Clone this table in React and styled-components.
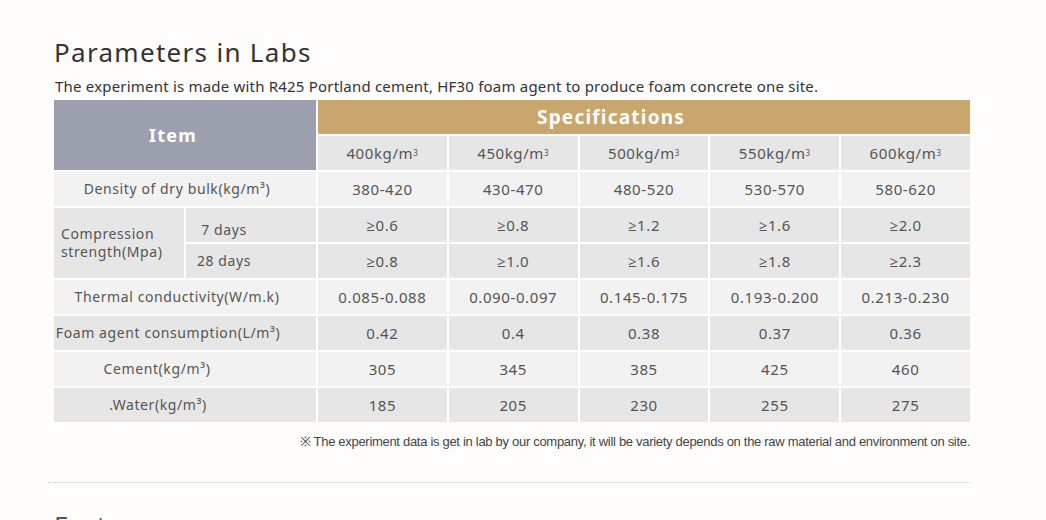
import React from "react";
import styled, { createGlobalStyle } from "styled-components";

const GlobalStyle = createGlobalStyle`
  body {
    margin: 0;
    background: #fefdfc;
    font-family: "Noto Sans", "Open Sans", sans-serif;
    color: #4a4a4a;
  }
`;

const Page = styled.div`
  padding: 30px 0 0 54px;
  width: 916px;
`;

const Title = styled.h2`
  margin: 0;
  font-size: 26px;
  font-weight: 400;
  line-height: 44px;
  color: #333;
  letter-spacing: 1.3px;
`;

const Lead = styled.p`
  margin: 0 0 0 1px;
  font-size: 15px;
  line-height: 24px;
  color: #333;
  letter-spacing: 0.2px;
`;

const Grid = styled.div`
  margin-top: 2px;
  display: grid;
  grid-template-columns: 130px 130px repeat(5, 1fr);
  grid-auto-rows: 34px;
  gap: 2px;
  background: #fff;
`;

const Cell = styled.div`
  display: flex;
  align-items: center;
  justify-content: ${({ $left }) => ($left ? "flex-start" : "center")};
  grid-column: ${({ $col }) => $col || "auto"};
  grid-row: ${({ $row }) => $row || "auto"};
  background: ${({ $dark }) => ($dark ? "#e6e6e6" : "#f2f2f2")};
  font-size: 15px;
  letter-spacing: 0.6px;
  color: #555;
  white-space: nowrap;
  padding: ${({ $pad }) => $pad || "0"};
`;

const HeadCell = styled(Cell)`
  background: ${({ $gold }) => ($gold ? "#c9a66e" : "#9c9fae")};
  color: #fff;
  font-weight: 700;
  font-size: ${({ $gold }) => ($gold ? "19px" : "18px")};
  letter-spacing: 1.2px;
`;

const Label = styled(Cell)`
  font-size: 14px;
  line-height: 18px;
  white-space: normal;
`;

const Sup = styled.sup`
  font-size: 8px;
  vertical-align: 7px;
  line-height: 0;
`;

const Note = styled.p`
  margin: 10px 0 0;
  text-align: right;
  font-family: "Liberation Sans", Arial, sans-serif;
  font-size: 13px;
  letter-spacing: -0.3px;
  color: #444;
`;

const Divider = styled.div`
  margin: 32px 0 0 -6px;
  width: 922px;
  border-top: 1px dotted #c8c8c8;
`;

const NextTitle = styled.h2`
  margin: 27px 0 0;
  font-size: 26px;
  line-height: 30px;
  font-weight: 400;
  color: #555;
`;

const densities = ["400", "450", "500", "550", "600"];

const rows = [
  { label: "Density of dry bulk(kg/m³)", pad: "0 16px 0 0", values: ["380-420", "430-470", "480-520", "530-570", "580-620"], dark: false },
  { label: "Thermal conductivity(W/m.k)", pad: "0 16px 0 0", values: ["0.085-0.088", "0.090-0.097", "0.145-0.175", "0.193-0.200", "0.213-0.230"], dark: false },
  { label: "Foam agent consumption(L/m³)", pad: "0 34px 0 0", values: ["0.42", "0.4", "0.38", "0.37", "0.36"], dark: true },
  { label: "Cement(kg/m³)", pad: "0 56px 0 0", values: ["305", "345", "385", "425", "460"], dark: false },
  { label: ".Water(kg/m³)", pad: "0 54px 0 0", values: ["185", "205", "230", "255", "275"], dark: true },
];

const strength = [
  { days: "7 days", pad: "10px 54px 0 0", values: ["≥0.6", "≥0.8", "≥1.2", "≥1.6", "≥2.0"] },
  { days: "28 days", pad: "0 54px 0 0", values: ["≥0.8", "≥1.0", "≥1.6", "≥1.8", "≥2.3"] },
];

const ValueRow = ({ row }) => (
  <>
    <Label $col="1 / 3" $dark={row.dark} $pad={row.pad}>
      {row.label}
    </Label>
    {row.values.map((v, i) => (
      <Cell key={i} $dark={row.dark}>
        {v}
      </Cell>
    ))}
  </>
);

const App = () => {
  return (
    <Page>
      <GlobalStyle />
      <Title>Parameters in Labs</Title>
      <Lead>
        The experiment is made with R425 Portland cement, HF30 foam agent to produce foam concrete one site.
      </Lead>

      <Grid>
        <HeadCell $col="1 / 3" $row="1 / 3" $pad="0 24px 0 0">
          Item
        </HeadCell>
        <HeadCell $gold $col="3 / 8" $pad="0 66px 0 0">
          Specifications
        </HeadCell>
        {densities.map((d) => (
          <Cell key={d} $dark>
            {d}kg/m<Sup>3</Sup>
          </Cell>
        ))}

        <ValueRow row={rows[0]} />

        <Label $col="1" $row="4 / 6" $dark $left $pad="0 0 0 7px">
          Compression strength(Mpa)
        </Label>
        {strength.map((s, r) => (
          <React.Fragment key={s.days}>
            <Label $col="2" $row={`${4 + r}`} $dark $pad={s.pad}>
              {s.days}
            </Label>
            {s.values.map((v, i) => (
              <Cell key={i} $dark>
                {v}
              </Cell>
            ))}
          </React.Fragment>
        ))}

        {rows.slice(1).map((row) => (
          <ValueRow key={row.label} row={row} />
        ))}
      </Grid>

      <Note>
        ※ The experiment data is get in lab by our company, it will be variety depends on the raw material and environment on site.
      </Note>
      <Divider />
      <NextTitle>Features</NextTitle>
    </Page>
  );
};

export default App;
